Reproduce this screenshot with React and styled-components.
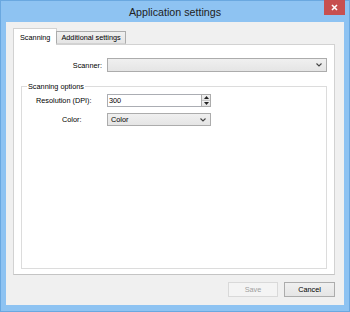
import React from 'react'
import styled, { createGlobalStyle } from 'styled-components'

const Global = createGlobalStyle`
    html, body {
        margin: 0;
        padding: 0;
        background: #8ec3f2;
    }
    * {
        box-sizing: border-box;
    }
`

const Window = styled.div`
    width: 350px;
    height: 312px;
    display: flex;
    flex-direction: column;
    background: #8ec3f2;
    border: 1px solid #6aa8e0;
    font-family: "Liberation Sans", Arial, sans-serif;
    color: #000;
`

const TitleBar = styled.div`
    position: relative;
    height: 21px;
    display: flex;
    align-items: center;
    justify-content: center;
    font-size: 10.7px;
    color: #222;
    padding-top: 1px;
`

const CloseButton = styled.div`
    position: absolute;
    top: -1px;
    right: 4px;
    width: 21px;
    height: 15px;
    background: #c75050;
    display: flex;
    align-items: center;
    justify-content: center;
`

const Client = styled.div`
    flex: 1;
    margin: 0 5px 6px 5px;
    background: #f0f0f0;
    display: flex;
    flex-direction: column;
    padding: 6px 9px 8px 7px;
`

const TabStrip = styled.div`
    display: flex;
    align-items: flex-end;
    height: 16px;
    position: relative;
    z-index: 1;
`

const Tab = styled.div`
    height: ${({ $active }) => ($active ? '17px' : '13px')};
    margin-bottom: ${({ $active }) => ($active ? '-1px' : '0')};
    padding: 0 ${({ $active }) => ($active ? '6px' : '4px')};
    display: flex;
    align-items: center;
    font-size: 7.3px;
    background: ${({ $active }) => ($active ? '#fff' : 'linear-gradient(#f0f0f0, #e5e5e5)')};
    border: 1px solid ${({ $active }) => ($active ? '#d2d2d2' : '#acacac')};
    border-bottom: ${({ $active }) => ($active ? 'none' : '1px solid #d2d2d2')};
    margin-left: ${({ $active }) => ($active ? '0' : '-1px')};
`

const Panel = styled.div`
    flex: 1;
    background: #fff;
    border: 1px solid #d2d2d2;
    border-bottom-color: #c4c4c4;
    display: flex;
    flex-direction: column;
    padding: 13px 7px 5px 7px;
`

const FieldRow = styled.div`
    display: grid;
    grid-template-columns: 81px 1fr;
    column-gap: 5px;
    align-items: center;
`

const Label = styled.label`
    font-size: 7.3px;
    justify-self: ${({ $align }) => $align || 'end'};
    margin-left: ${({ $indent }) => ($indent ? `${$indent}px` : '0')};
`

const Combo = styled.div`
    height: ${({ $h }) => $h || 14}px;
    width: ${({ $w }) => ($w ? `${$w}px` : 'auto')};
    border: 1px solid #acacac;
    background: linear-gradient(#f0f0f0, #e5e5e5);
    display: flex;
    align-items: center;
    justify-content: space-between;
    padding: 0 4px 0 3px;
    font-size: 7.3px;
`

const Group = styled.fieldset`
    flex: 1;
    margin: 10px 0 0 0;
    border: 1px solid #dcdcdc;
    padding: 3px 0 0 0;
    display: flex;
    flex-direction: column;
    gap: 6px;
`

const Legend = styled.legend`
    font-size: 7.3px;
    line-height: 9px;
    margin-left: 5px;
    padding: 0 1px;
`

const GroupRow = styled.div`
    display: grid;
    grid-template-columns: 85px auto 1fr;
    align-items: center;
`

const Spin = styled.div`
    display: flex;
    height: 13px;
    width: 104px;
`

const TextInput = styled.div`
    flex: 1;
    border: 1px solid #abadb3;
    border-right: none;
    background: #fff;
    font-size: 7.3px;
    display: flex;
    align-items: center;
    padding-left: 1px;
`

const SpinButtons = styled.div`
    width: 10px;
    display: flex;
    flex-direction: column;
    border: 1px solid #acacac;
`

const SpinButton = styled.div`
    flex: 1;
    background: linear-gradient(#f2f2f2, #e2e2e2);
    display: flex;
    align-items: center;
    justify-content: center;
    & + & {
        border-top: 1px solid #c8c8c8;
    }
`

const ButtonRow = styled.div`
    display: flex;
    justify-content: flex-end;
    gap: 6px;
    margin-top: 7px;
`

const Button = styled.div`
    width: ${({ $w }) => $w}px;
    height: 15px;
    display: flex;
    align-items: center;
    justify-content: center;
    font-size: 7.3px;
    border: 1px solid ${({ $disabled }) => ($disabled ? '#d9d9d9' : '#acacac')};
    background: ${({ $disabled }) => ($disabled ? '#f4f4f4' : 'linear-gradient(#f0f0f0, #e5e5e5)')};
    color: ${({ $disabled }) => ($disabled ? '#a0a0a0' : '#000')};
`

const Chevron = () => (
    <svg width="6" height="4" viewBox="0 0 6 4">
        <polyline points="0.5,0.5 3,3 5.5,0.5" fill="none" stroke="#444" strokeWidth="1.1" />
    </svg>
)

const Arrow = ({ up }) => (
    <svg width="5" height="3" viewBox="0 0 5 3">
        <polygon points={up ? '0,3 2.5,0 5,3' : '0,0 2.5,3 5,0'} fill="#222" />
    </svg>
)

export default function App() {
    return (
        <>
            <Global />
            <Window>
                <TitleBar>
                    Application settings
                    <CloseButton>
                        <svg width="7" height="7" viewBox="0 0 7 7">
                            <path d="M1 1 L6 6 M6 1 L1 6" stroke="#fff" strokeWidth="1.6" />
                        </svg>
                    </CloseButton>
                </TitleBar>
                <Client>
                    <TabStrip>
                        <Tab $active>Scanning</Tab>
                        <Tab>Additional settings</Tab>
                    </TabStrip>
                    <Panel>
                        <FieldRow>
                            <Label>Scanner:</Label>
                            <Combo>
                                <span></span>
                                <Chevron />
                            </Combo>
                        </FieldRow>
                        <Group>
                            <Legend>Scanning options</Legend>
                            <GroupRow>
                                <Label $align="start" $indent={14}>Resolution (DPI):</Label>
                                <Spin>
                                    <TextInput>300</TextInput>
                                    <SpinButtons>
                                        <SpinButton><Arrow up /></SpinButton>
                                        <SpinButton><Arrow /></SpinButton>
                                    </SpinButtons>
                                </Spin>
                            </GroupRow>
                            <GroupRow>
                                <Label $align="start" $indent={40}>Color:</Label>
                                <Combo $w={104} $h={13}>
                                    <span>Color</span>
                                    <Chevron />
                                </Combo>
                            </GroupRow>
                        </Group>
                    </Panel>
                    <ButtonRow>
                        <Button $w={50} $disabled>Save</Button>
                        <Button $w={51}>Cancel</Button>
                    </ButtonRow>
                </Client>
            </Window>
        </>
    )
}
